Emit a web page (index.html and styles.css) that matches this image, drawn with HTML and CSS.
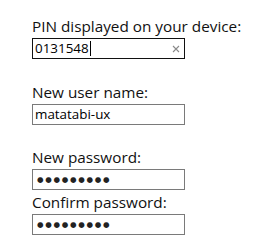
FILE: index.html
```html
<!DOCTYPE html>
<html>
<head>
<meta charset="utf-8">
<link rel="stylesheet" href="styles.css">
</head>
<body>
<div class="form">
  <div class="group first">
    <div class="label">PIN displayed on your device:</div>
    <div class="field focused">
      <span class="value">0131548</span><span class="caret"></span>
      <svg class="clear" width="8" height="8" viewBox="0 0 8 8"><path d="M1 1 L7 7 M7 1 L1 7" stroke="#8a8a8a" stroke-width="1.1" fill="none"/></svg>
    </div>
  </div>
  <div class="group second">
    <div class="label">New user name:</div>
    <div class="field"><span class="value">matatabi-ux</span></div>
  </div>
  <div class="group">
    <div class="label">New password:</div>
    <div class="field"><span class="dots">●●●●●●●●●</span></div>
  </div>
  <div class="group">
    <div class="label">Confirm password:</div>
    <div class="field"><span class="dots">●●●●●●●●●</span></div>
  </div>
</div>
</body>
</html>
```
FILE: styles.css
```css
html, body {
  margin: 0;
  padding: 0;
  background: #ffffff;
}
body {
  font-family: "Open Sans", "Noto Sans", sans-serif;
  color: #111111;
}
.form {
  padding: 14px 0 0 32px;
  display: flex;
  flex-direction: column;
}
.group {
  display: flex;
  flex-direction: column;
}
.group.first {
  margin-bottom: 21px;
}
.group.second {
  margin-bottom: 20px;
}
.label {
  height: 24px;
  line-height: 24px;
  font-size: 15.3px;
  white-space: nowrap;
}
.field {
  box-sizing: border-box;
  width: 153px;
  height: 21px;
  border: 1px solid #7a7a7a;
  display: flex;
  align-items: center;
  padding-left: 2px;
  position: relative;
}
.field.focused {
  border-color: #111111;
}
.value {
  font-size: 13.4px;
  line-height: 19px;
  color: #000;
}
.caret {
  width: 1px;
  height: 15px;
  background: #000;
  margin-left: 1px;
}
.clear {
  position: absolute;
  right: 4px;
  top: 6px;
}
.dots {
  font-family: "DejaVu Sans", sans-serif;
  font-size: 7.5px;
  letter-spacing: 1.7px;
  color: #222;
  padding-left: 2px;
}
```
